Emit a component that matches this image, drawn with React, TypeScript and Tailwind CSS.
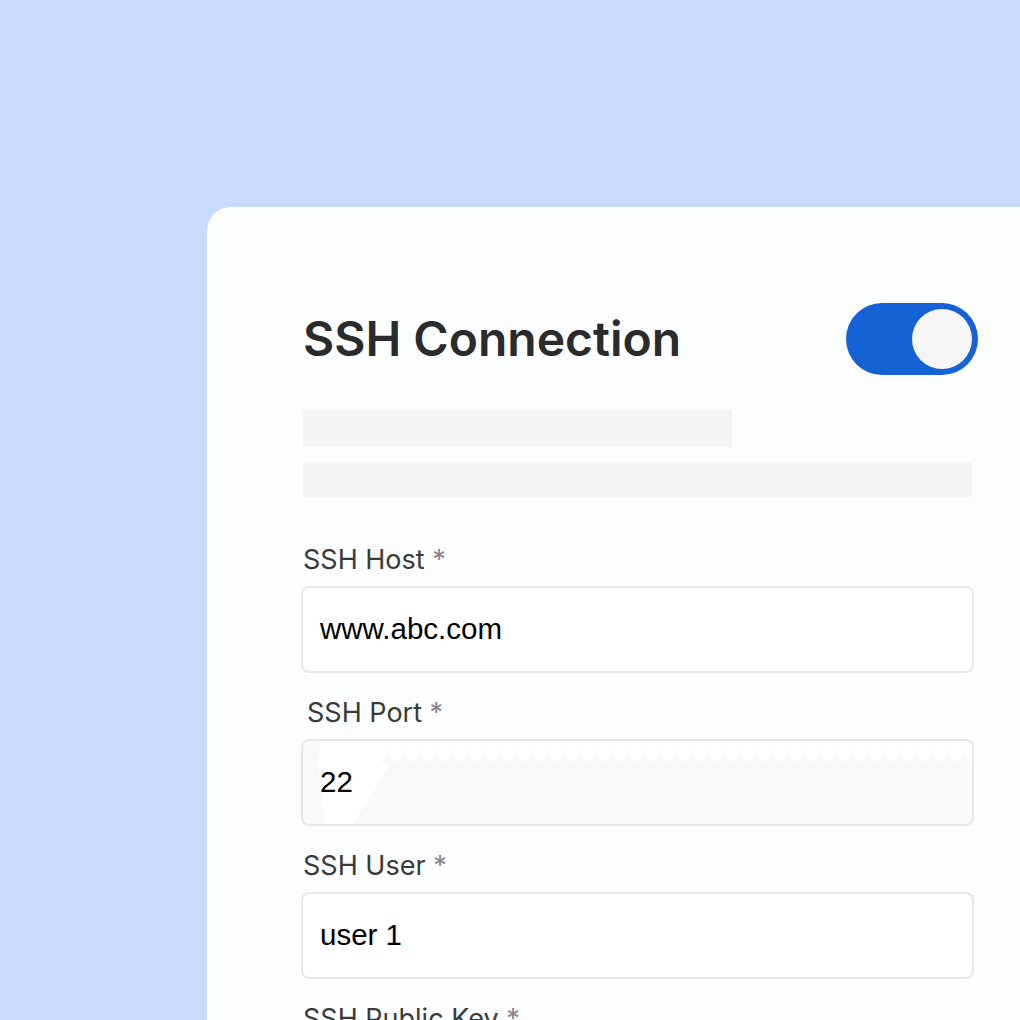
import React from 'react';

const fields = [
  { label: 'SSH Host', value: 'www.abc.com', muted: false, shift: false },
  { label: 'SSH Port', value: '22', muted: true, shift: true },
  { label: 'SSH User', value: 'user 1', muted: false, shift: false },
  { label: 'SSH Public Key', value: '', muted: false, shift: false },
];

// white scalloped edge left over on the port field's loading shimmer
const shimmerPath = (() => {
  let d = 'M18 0 L669 0 L669 20';
  for (let x = 669; x > 88; x -= 16) {
    d += ` Q${x - 4} 20 ${x - 8} 8 Q${x - 12} 20 ${x - 16} 22`;
  }
  d += ' L88 22 L50 83 L22 83 L15 20 Z';
  return d;
})();

const Field: React.FC<{ label: string; value: string; muted: boolean; shift: boolean }> = ({ label, value, muted, shift }) => (
  <div className="flex flex-col">
    <label className={`h-[30px] leading-[30px] text-[27px] text-[#3a3a3a] ${shift ? 'pl-[6px]' : 'pl-[2px]'}`}>
      {label} <span className="text-[#8b8487]">*</span>
    </label>
    <div
      className={`relative overflow-hidden mt-[11px] h-[87px] w-[673px] rounded-[8px] border-2 border-[#e6e7e8] flex items-center px-[17px] text-[29.5px] text-black font-['Liberation_Sans',Arial,sans-serif] ${muted ? 'bg-[#f8f9f9]' : 'bg-white'}`}
    >
      {muted && (
        <svg className="absolute left-0 top-0" width="669" height="83" viewBox="0 0 669 83">
          <path d={shimmerPath} fill="#ffffff" />
        </svg>
      )}
      <span className="relative">{value}</span>
    </div>
  </div>
);

const App: React.FC = () => {
  return (
    <div className="w-[1020px] h-[1020px] overflow-hidden bg-[#c6dbfd] font-['Inter',sans-serif]">
      <div className="ml-[207px] mt-[207px] w-[860px] h-[900px] rounded-tl-[24px] bg-[#fbfdfe] pt-[96px] pl-[94px]">
        <div className="w-[677px] h-[72px] flex items-center justify-between">
          <h1 className="pl-[2px] text-[48px] font-semibold text-[#2b2b2b]">SSH Connection</h1>
          <div className="w-[132px] h-[72px] rounded-full bg-[#1462d5] p-[6px] flex justify-end">
            <div className="w-[60px] h-[60px] rounded-full bg-[#f6f6f6]" />
          </div>
        </div>

        <div className="mt-[35px] pl-[2px] flex flex-col gap-[15px]">
          <div className="w-[429px] h-[37px] bg-[#f4f5f5]" />
          <div className="w-[669px] h-[35px] bg-[#f4f5f5]" />
        </div>

        <div className="mt-[48px] flex flex-col gap-[25px]">
          {fields.map((f) => (
            <Field key={f.label} {...f} />
          ))}
        </div>
      </div>
    </div>
  );
};

export default App;
